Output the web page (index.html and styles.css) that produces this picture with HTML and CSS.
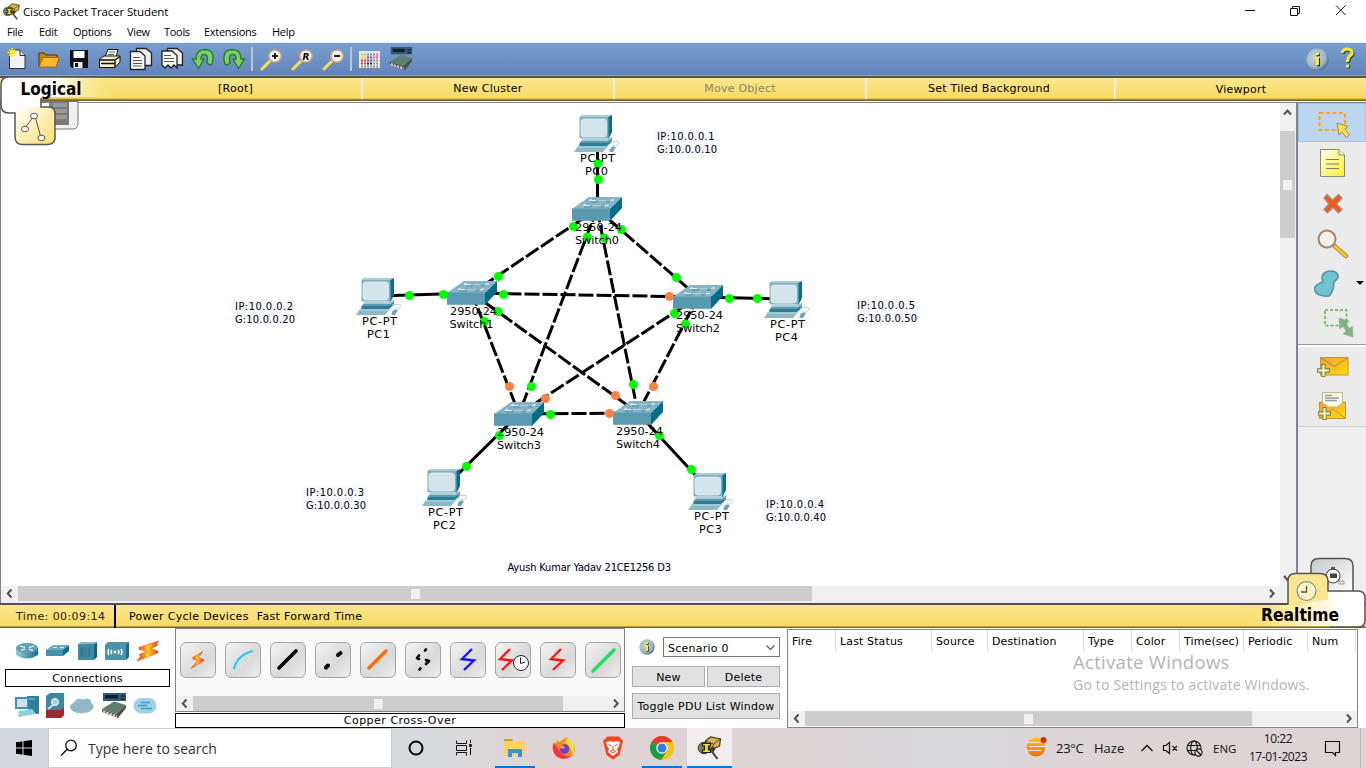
FILE: index.html
```html
<!DOCTYPE html>
<html lang="en">
<head>
<meta charset="utf-8">
<title>Cisco Packet Tracer Student</title>
<link rel="stylesheet" href="styles.css">
</head>
<body>
<svg class="defs" width="0" height="0">
  <defs>
    <linearGradient id="yel" x1="0" y1="0" x2="1" y2="1"><stop offset="0" stop-color="#fff"/><stop offset="1" stop-color="#f9df6c"/></linearGradient>
    <linearGradient id="gry" x1="0" y1="0" x2="1" y2="1"><stop offset="0" stop-color="#c8c8c8"/><stop offset="1" stop-color="#fff"/></linearGradient>
    <linearGradient id="bar" x1="0" x2="1" y1="0" y2="0"><stop offset="0.45" stop-color="#fff"/><stop offset="0.900" stop-color="#fae27b" stop-opacity="0.500"/><stop offset="1" stop-color="#fae27b" stop-opacity="0"/></linearGradient>
    <linearGradient id="barR" x1="0" x2="1" y1="0" y2="0"><stop offset="0" stop-color="#fae27b" stop-opacity="0"/><stop offset="0.300" stop-color="#fbe88f"/><stop offset="0.800" stop-color="#fff"/></linearGradient>
    <linearGradient id="fire" x1="0" x2="1" y1="0" y2="0"><stop offset="0" stop-color="#e52a1a"/><stop offset="0.5" stop-color="#ffd21a"/><stop offset="1" stop-color="#e52a1a"/></linearGradient>
    <linearGradient id="mail" x1="0" x2="1" y1="0" y2="1"><stop offset="0" stop-color="#f79a3c"/><stop offset="1" stop-color="#ffe000"/></linearGradient>
    <linearGradient id="note" x1="0" x2="1" y1="0" y2="1"><stop offset="0" stop-color="#fffff0"/><stop offset="1" stop-color="#f6f32c"/></linearGradient>
    <linearGradient id="teal" x1="0" x2="1" y1="0" y2="0"><stop offset="0" stop-color="#9cc9d6"/><stop offset="1" stop-color="#0d708b"/></linearGradient>
    <radialGradient id="orb" cx="0.4" cy="0.4" r="0.65"><stop offset="0" stop-color="#c3d1d8"/><stop offset="0.7" stop-color="#9fb8c4"/><stop offset="1" stop-color="#426779"/></radialGradient>
    <symbol id="pc" viewBox="0 0 45 37">
      <path d="M5.500 2 L9 0 H38 V17 L34.500 24 Z" fill="#077089"/>
      <path d="M5.500 2 L9 0 H38 L34.500 2 Z" fill="#a9ccd7"/>
      <rect x="5.500" y="2" width="29" height="21.500" rx="1" fill="#7fb0c0"/>
      <rect x="7" y="4" width="25.500" height="18" rx="3" fill="#d3e5eb" stroke="#e4f0f4" stroke-width="0.700"/>
      <path d="M9 24 H34 L38 22 V25 L34 29 H5 Z" fill="#5b9bb0"/>
      <path d="M9 24 H34 L38 22 V23 L34 26 H7 Z" fill="#a9ccd7"/>
      <path d="M6 28 H33 L38 25 V27 L33 31 H5 Z" fill="#2a7f97"/>
      <path d="M4 31 H34 L29 37 H0 Z" fill="#8ab9c8"/>
      <path d="M4 31 H34 L33 33 H2.500 Z" fill="#a5c9d5"/>
      <path d="M36 34 Q38 30.500 42 32 L39 37 H35.500 Z" fill="#6ba5b8"/>
      <path d="M36 27 Q47 25 44.500 29 Q42 32 38 31" fill="none" stroke="#b7d1da" stroke-width="1"/>
    </symbol>
    <symbol id="sw" viewBox="0 0 50 24">
      <path d="M0 12 L17 0 H50 L38 12 Z" fill="#86b4c4"/>
      <path d="M38 12 L50 0 V11 L38 24 Z" fill="#066d88"/>
      <rect x="0" y="11.500" width="38" height="12.300" fill="#5a9ab0"/>
      <path d="M17 3.500 L19 2.500 V3.500 H24 M38 3.500 L41 2.500 V4 M11 8.500 L13 7.500 V8.500 H18 M33 9 L36 8 V9" fill="none" stroke="#e4eff3" stroke-width="1.200"/>
      <path d="M26 3.500 H34 M20 8.500 H29" stroke="#b5d2dc" stroke-width="0.900"/>
      <path d="M19 5 H26 M12 10 H20 M28 10 H32 M34 5 H38" stroke="#4f8ea3" stroke-width="0.900"/>
    </symbol>
    <symbol id="pt" viewBox="0 0 24 24">
      <path d="M8 5 L13 1 L23 3 L22 10 L13 14 L7 10 Z" fill="#d8b25e" stroke="#4b3b16" stroke-width="1.200"/>
      <path d="M8 5 L16 8 L23 3 M16 8 L15 13" stroke="#5b4618" fill="none"/>
      <path d="M12 13 L15 10 L18 13 L16 16 Z" fill="#3b3a26"/>
      <circle cx="6.500" cy="12" r="5.800" fill="#77836f" stroke="#39423a"/>
      <path d="M5 7.500 H13 V10 H11 V14 H13 V16.500 H5 V14 H7 V10 H5 Z" fill="#f3e41b" stroke="#1f1c05" stroke-width="1.200"/>
      <path d="M14 15 L20 23" stroke="#3e3e3e" stroke-width="2"/>
    </symbol>
    <symbol id="info" viewBox="0 0 24 24">
      <circle cx="12" cy="12" r="11.500" fill="url(#orb)"/>
      <path d="M11 6 H14.500 V8.500 H11 Z M10.500 10.500 H14.500 V19 H11.500 V12 H10.500 Z" fill="#111"/>
      <path d="M10 5 H13.500 V7.500 H10 Z M9.500 9.500 H13.500 V18 H10.500 V11.500 H9.500 Z" fill="#ffee2b"/>
    </symbol>
    <symbol id="lens" viewBox="0 0 24 24">
      <path d="M11 14 L3 22" stroke="#ffdc54" stroke-width="3" stroke-linecap="round"/>
      <circle cx="16" cy="9" r="6.300" fill="#f7f2ee" stroke="#c09a84" stroke-width="1.500"/>
    </symbol>
    <symbol id="uturn" viewBox="0 0 24 24">
      <path d="M21 17.500 Q25 3 14 2.500 Q5 2.500 5 12 H1.500 L7.500 21.500 L13 12 H10 Q9.500 7.500 13.500 7.500 Q18 7.500 16 16 Q19 19 21 17.500Z" fill="#7ed25a" stroke="#237a34" stroke-width="1.400"/>
    </symbol>
    <symbol id="device" viewBox="0 0 28 28">
      <rect x="3" y="1" width="23" height="8" fill="#34597a"/><rect x="5" y="3" width="13" height="3.500" fill="#10202d"/><path d="M21 4 H25 M21 7 H25" stroke="#0b141c"/>
      <path d="M2 17 L14 9.500 L26 13 L16 22 Z" fill="#5d7f72"/><path d="M2 17 L16 22 L26 13 V16 L18 26 L2 20 Z" fill="#4d504d"/>
      <path d="M3 19.500 L17 24.500" stroke="#d4d0c0" stroke-width="2.400" stroke-dasharray="2.500 1"/>
    </symbol>
    <symbol id="bolt" viewBox="0 0 24 24">
      <path d="M19 2 L7 9 L7 10.500 L13 13 L5 22 L20 13 L20 11.500 L13.500 9 Z" fill="url(#fire)" stroke="#ef4b20" stroke-width="0.800"/>
    </symbol>
    <symbol id="zig" viewBox="0 0 24 24"><path d="M16 2 L6 12 L18 13.500 L8 23" fill="none" stroke="currentColor" stroke-width="2.400"/></symbol>
    <symbol id="left" viewBox="0 0 15 15"><path d="M10.500 3.500 L6.800 7.500 L10.500 11.500" fill="none" stroke="#505050" stroke-width="2"/></symbol>
    <symbol id="right" viewBox="0 0 15 15"><path d="M5 3.500 L8.700 7.500 L5 11.500" fill="none" stroke="#505050" stroke-width="2"/></symbol>
    <symbol id="plus" viewBox="0 0 12 12"><path d="M4.500 0.500 H7.500 V4.500 H11.500 V7.500 H7.500 V11.500 H4.500 V7.500 H0.500 V4.500 H4.500 Z" fill="#f2f5d0" stroke="#7b8a35"/></symbol>
  </defs>
</svg>

<div class="app">
  <header class="titlebar">
    <svg class="app-icon" width="17" height="17"><use href="#pt"/></svg>
    <span class="title">Cisco Packet Tracer Student</span>
    <svg class="controls" width="116" height="22" fill="none" stroke="#111"><path d="M5 10.500 H15"/><path d="M50.500 8.500 h7 v7 h-7 z M52.500 8 v-1.500 h7 v7 h-2"/><path d="M96 5.500 L105.500 15 M105.500 5.500 L96 15"/></svg>
  </header>
  <nav class="menubar">
    <span class="m1">File</span><span class="m2">Edit</span><span class="m3">Options</span><span class="m4">View</span><span class="m5">Tools</span><span class="m6">Extensions</span><span class="m7">Help</span>
  </nav>
  <div class="toolbar">
    <svg class="tool"><path d="M4.500 3 H15 L20 8 V21.500 H4.500 Z" fill="#f4f4f4" stroke="#333"/><path d="M15 3 V8.500 H20" fill="#ddd" stroke="#333"/><path d="M7 1 V10 M2.500 5.500 H11.500 M4 2.500 L10 8.500 M10 2.500 L4 8.500" stroke="#ffec24" stroke-width="1.500"/></svg>
    <svg class="tool"><path d="M3 20 V6 H8 L10 8 H21 V11" fill="#c98410" stroke="#4c3105"/><path d="M3 20 L7 10.500 H23 L20 20 Z" fill="#ffb92a" stroke="#a86c0c"/></svg>
    <svg class="tool"><path d="M3 3 H21 V21 H5 L3 19 Z" fill="#111"/><rect x="6.500" y="4" width="11" height="7" fill="#fff"/><rect x="6.500" y="15" width="9" height="6" fill="#e8e8e8"/><rect x="8" y="16" width="3" height="4" fill="#111"/></svg>
    <svg class="tool"><path d="M7 10 L10 2.500 H20 L18 10 Z" fill="#fff" stroke="#111"/><path d="M11 5 H17 M10 7.500 H16" stroke="#555"/><path d="M1.500 12 L6 9 H22 V15 L17 20.500 H1.500 Z" fill="#f4f3c4" stroke="#111"/><path d="M1.500 13 H17 V20 M17 13 L22 9.500 M3 16.500 H16" stroke="#111" fill="none" stroke-width="1.500"/></svg>
    <svg class="tool"><path d="M7.500 1.500 H17 L22.500 6 V18.500 H7.500 Z" fill="#eee" stroke="#222" stroke-width="1.300"/><path d="M1.500 4.500 H11 L16 9 V22.500 H1.500 Z" fill="#fff" stroke="#222" stroke-width="1.300"/><path d="M4 10.500 H11 M4 13.500 H13 M4 16.500 H13 M4 19 H13" stroke="#555"/></svg>
    <svg class="tool"><path d="M7.500 1.500 H17 L22.500 6 V18 H7.500 Z" fill="#eee" stroke="#222" stroke-width="1.300"/><path d="M2 4 H12 L17 8.500 V21 L14 18 L11 21 L8 18 L5 21 L2 18 Z" fill="#fff" stroke="#222" stroke-width="1.300"/><path d="M4 8.500 H11 M4 11.500 H14 M4 14.500 H14" stroke="#555"/></svg>
    <svg class="tool"><use href="#uturn"/></svg>
    <svg class="tool"><use href="#uturn" transform="translate(24 0) scale(-1 1)"/></svg>
    <i class="sep"></i>
    <svg class="tool"><use href="#lens"/><path d="M13 9 H19 M16 6 V12" stroke="#222" stroke-width="2"/></svg>
    <svg class="tool"><use href="#lens"/><text x="12.500" y="12.500" class="zr">R</text></svg>
    <svg class="tool"><use href="#lens"/><path d="M13 9 H19" stroke="#222" stroke-width="2"/></svg>
    <i class="sep"></i>
    <svg class="tool"><rect x="1" y="4" width="21" height="17" fill="#e6e6e6"/><g stroke-width="2" stroke-dasharray="2 1"><path d="M3 7.500 H9" stroke="#aadd33"/><path d="M3 10.500 H9" stroke="#ffcc22"/><path d="M3 13.500 H9 M3 16.500 H9" stroke="#e8431c"/><path d="M9 7.500 H15" stroke="#33bbaa"/><path d="M9 10.500 H15 M9 13.500 H15" stroke="#6a4ccc"/><path d="M9 16.500 H15" stroke="#333"/><path d="M15 7.500 H21 M15 10.500 H21" stroke="#e05bd0"/><path d="M15 13.500 H21 M15 16.500 H21 M3 19.500 H21" stroke="#999"/></g></svg>
    <svg class="tool tool-dev"><use href="#device"/></svg>
    <span class="grow"></span>
    <svg class="tool-info"><use href="#info"/></svg>
    <svg class="tool-help" width="18" height="24"><g fill="none" stroke-width="3"><path d="M4 7 Q5 3 9.500 3 Q15 3.500 14 8 Q9.500 11 9.500 16 M9.500 18.500 V21.500" stroke="#2c3c4c"/><path d="M3 6 Q4 2 8.500 2 Q14 2.500 13 7 Q8.500 10 8.500 15 M8.500 17.500 V20.500" stroke="#f5ea2e"/></g></svg>
  </div>

  <div class="navbar">
    <span class="nav n1">[Root]</span><span class="nav n2">New Cluster</span><span class="nav n3">Move Object</span><span class="nav n4">Set Tiled Background</span><span class="nav n5">Viewport</span>
    <svg class="tab-logical" width="120" height="71">
      <path d="M41 25.500 H78 V47 Q78 53 73 53 H50 V25.500 Z" fill="#f0f0f0" stroke="#777"/>
      <rect x="49" y="26" width="20" height="23" fill="#7a7a7a"/><rect x="53" y="27" width="14" height="4" fill="#9a9a9a"/><rect x="53" y="33" width="14" height="4" fill="#9a9a9a"/><rect x="53" y="39" width="14" height="4" fill="#9a9a9a"/>
      <path d="M120 1.500 V21 H41 V31 H9 Q1 29 1 25 V9 Q1 1.500 9 1.500 Z" fill="url(#bar)"/>
      <path d="M1 25 H41 V31 H49 Q55 31 55 38 V62 Q55 68 48 68.500 H22 Q15 68 15 61 V37 H9 Q1 37 1 29 Z" fill="#fff"/>
      <path d="M15 31 H49 Q55 31 55 38 V62 Q55 68 48 68.500 H22 Q15 68 15 61 Z" fill="url(#yel)"/>
      <path d="M120 0.800 H9 Q1 1 1 9 V29 Q1 37 9 37 H15 V61 Q15 68 22 68.500 H48 Q55 68 55 62 V38 Q55 31 49 31 H41 V22" fill="none" stroke="#555" stroke-width="1.500"/>
      <path d="M34 40 L25 52 M35 40 L41 62" stroke="#555" fill="none"/>
      <g fill="#fff" stroke="#555"><ellipse cx="34" cy="40" rx="3.500" ry="2.800"/><ellipse cx="25" cy="53" rx="3.500" ry="2.800"/><ellipse cx="41.500" cy="62" rx="3.500" ry="2.800"/></g>
      <text class="bigtab" x="20.500" y="19" textLength="61" lengthAdjust="spacingAndGlyphs">Logical</text>
    </svg>
  </div>

  <main class="main">
    <section class="workspace">
      <svg class="topology" width="1279" height="483" viewBox="1 103 1279 483">
        <g stroke="#000" stroke-width="3" fill="none">
          <path d="M597.500 145 L597.500 209 M378 296 L472 293 M698 297 L785 299 M519 414 L444 488 M638 413 L710 491"/>
          <g stroke-dasharray="15 3" stroke-dashoffset="1.500">
            <path d="M597 209 L472 293"/><path d="M597 209 L698 297"/><path d="M597 209 L519 414"/><path d="M597 209 L638 413"/>
            <path d="M472 293 L698 297"/><path d="M472 293 L519 414"/><path d="M472 293 L638 413"/>
            <path d="M698 297 L519 414"/><path d="M698 297 L638 413"/><path d="M519 414 L638 413"/>
          </g>
        </g>
        <use href="#pc" x="574" y="115" width="45" height="37"/><use href="#pc" x="356" y="278" width="45" height="37"/><use href="#pc" x="764" y="281" width="45" height="37"/><use href="#pc" x="422" y="469" width="45" height="37"/><use href="#pc" x="688" y="473" width="45" height="37"/>
        <use href="#sw" x="572" y="197" width="50" height="24"/><use href="#sw" x="447" y="281" width="50" height="24"/><use href="#sw" x="673" y="285" width="50" height="24"/><use href="#sw" x="494" y="402" width="50" height="24"/><use href="#sw" x="613" y="401" width="50" height="24"/>
        <g fill="#00ff00">
          <circle cx="598" cy="163.500" r="4.500"/><circle cx="598.500" cy="179.500" r="4.500"/><circle cx="573.500" cy="226.500" r="4.500"/><circle cx="587.500" cy="237" r="4.500"/><circle cx="604.500" cy="238" r="4.500"/><circle cx="621.500" cy="229.500" r="4.500"/>
          <circle cx="409.500" cy="295.500" r="4.500"/><circle cx="443.500" cy="294.500" r="4.500"/><circle cx="498.500" cy="276.500" r="4.500"/><circle cx="503.500" cy="294.500" r="4.500"/><circle cx="498" cy="311.500" r="4.500"/><circle cx="484.500" cy="321.500" r="4.500"/>
          <circle cx="676.500" cy="277.500" r="4.500"/><circle cx="674.500" cy="313.500" r="4.500"/><circle cx="685.500" cy="324" r="4.500"/><circle cx="729.500" cy="298.500" r="4.500"/><circle cx="757.500" cy="298.500" r="4.500"/>
          <circle cx="531.500" cy="386.500" r="4.500"/><circle cx="550.500" cy="414.500" r="4.500"/><circle cx="633.500" cy="384.500" r="4.500"/><circle cx="499.500" cy="435.500" r="4.500"/><circle cx="466.500" cy="466.500" r="4.500"/><circle cx="659.500" cy="435.500" r="4.500"/><circle cx="691.500" cy="469.500" r="4.500"/>
        </g>
        <g fill="#ff8040"><circle cx="669.500" cy="296.500" r="4.500"/><circle cx="509.500" cy="386.500" r="4.500"/><circle cx="545.500" cy="398.500" r="4.500"/><circle cx="609.500" cy="413.500" r="4.500"/><circle cx="615.500" cy="395.500" r="4.500"/><circle cx="653.500" cy="386.500" r="4.500"/></g>
        <g class="label">
          <text x="580" y="162" textLength="35">PC-PT</text><text x="585" y="175" textLength="23">PC0</text>
          <text x="362" y="325" textLength="35">PC-PT</text><text x="367" y="338" textLength="23">PC1</text>
          <text x="770" y="328" textLength="35">PC-PT</text><text x="775" y="341" textLength="23">PC4</text>
          <text x="428" y="516" textLength="35">PC-PT</text><text x="433" y="529" textLength="23">PC2</text>
          <text x="694" y="520" textLength="35">PC-PT</text><text x="699" y="533" textLength="23">PC3</text>
          <text x="575" y="231" textLength="47">2950-24</text><text x="575" y="244" textLength="44">Switch0</text>
          <text x="450" y="315" textLength="47">2950-24</text><text x="449.500" y="328" textLength="44">Switch1</text>
          <text x="676" y="319" textLength="47">2950-24</text><text x="676" y="332" textLength="44">Switch2</text>
          <text x="497" y="436" textLength="47">2950-24</text><text x="497" y="449" textLength="44">Switch3</text>
          <text x="616" y="435" textLength="47">2950-24</text><text x="616" y="448" textLength="44">Switch4</text>
        </g>
        <g fill="#f8f8ff"><rect x="654" y="130" width="64" height="26"/><rect x="232" y="300" width="64" height="26"/><rect x="303" y="486" width="64" height="26"/><rect x="763" y="498" width="64" height="26"/><rect x="854" y="299" width="64" height="26"/><rect x="504" y="561" width="168" height="13"/></g>
        <g class="note">
          <text x="657" y="140" textLength="57.500">IP:10.0.0.1</text><text x="657" y="153" textLength="60">G:10.0.0.10</text>
          <text x="235" y="310" textLength="58">IP:10.0.0.2</text><text x="235" y="323" textLength="60">G:10.0.0.20</text>
          <text x="306" y="496" textLength="58">IP:10.0.0.3</text><text x="306" y="509" textLength="60">G:10.0.0.30</text>
          <text x="766" y="508" textLength="58">IP:10.0.0.4</text><text x="766" y="521" textLength="60">G:10.0.0.40</text>
          <text x="857" y="309" textLength="58">IP:10.0.0.5</text><text x="857" y="322" textLength="60">G:10.0.0.50</text>
          <text x="507.500" y="571" textLength="163.500">Ayush Kumar Yadav 21CE1256 D3</text>
        </g>
      </svg>
      <div class="vscroll"><svg width="15" height="28"><path d="M4 11.500 L7.500 7.500 L11 11.500" fill="none" stroke="#505050" stroke-width="2"/></svg><div class="vthumb"><i class="grip"></i></div><span class="grow"></span><svg width="15" height="15"><path d="M4 5 L7.500 9 L11 5" fill="none" stroke="#505050" stroke-width="2"/></svg></div>
      <div class="hscroll main-scroll"><svg width="17" height="15"><use href="#left" width="15" height="15"/></svg><div class="thumb t-main"><i class="grip"></i></div><span class="grow"></span><svg width="15" height="15"><use href="#right"/></svg></div>
    </section>
    <aside class="side">
      <div class="side-tools">
        <div class="sbtn on"><svg width="36" height="32"><rect x="4.500" y="6" width="25.500" height="17" fill="none" stroke="#ffa31a" stroke-width="2.200" stroke-dasharray="4 2.500"/><path d="M22 16 L33 19.500 L30 22 L34.500 28 L31.500 31 L27 25 L24 28 Z" fill="#ffe04c" stroke="#a08a4c"/></svg></div>
        <div class="sbtn"><svg width="36" height="32"><path d="M5.500 2.500 H24 L29.500 8 V29.500 H5.500 Z" fill="url(#note)" stroke="#8c8c72"/><path d="M24 2.500 V8 H29.500" fill="#f4f4b8" stroke="#8c8c72"/><path d="M11 12.500 H24 M11 17 H24 M11 21.500 H24" stroke="#7e7e62" stroke-width="1.200"/></svg></div>
        <div class="sbtn"><svg width="36" height="32"><path d="M12 7.500 L17.500 13 L23.500 7.500 L27 11 L21.500 17 L27 22.500 L23.500 26 L18 20.500 L12.500 26 L9 22.500 L14 17 L9 11 Z" fill="#ee5a1c" stroke="#a98a7c" stroke-width="1.200"/></svg></div>
        <div class="sbtn"><svg width="36" height="32"><path d="M19.500 19 L31 29" stroke="#9b8e62" stroke-width="4.500" stroke-linecap="round"/><path d="M20 19.500 L31 29" stroke="#ffc818" stroke-width="2.800" stroke-linecap="round"/><circle cx="12" cy="12" r="8.500" fill="#f5f1ee" stroke="#a8846c" stroke-width="2"/></svg></div>
        <div class="sbtn"><svg class="blob" width="36" height="32"><path d="M12 5 Q21 2 24 8 Q25 11 20 15 Q20 24 15 29 Q3 30 0 22 Q2 17 9 15 Q6 8 12 5 Z" fill="#70c4d2" stroke="#4d98a5" stroke-width="1.600"/></svg><i class="drop"></i></div>
        <div class="sbtn"><svg width="40" height="32"><rect x="10" y="3" width="21.500" height="15.500" fill="none" stroke="#6aad52" stroke-width="1.600" stroke-dasharray="3 2"/><path d="M24 11 L34 14 L31.500 17 L34.500 21.500 L37.500 19 L38 30 L28 27 L31 24 L28 19.500 L24.500 22 Z" fill="#7cb482" stroke="#93b896" stroke-width="0.600"/></svg></div>
        <i class="hr"></i>
        <div class="sbtn"><svg width="36" height="32"><rect x="5.500" y="6.500" width="27.500" height="17.500" fill="url(#mail)" stroke="#b8963c"/><path d="M5.500 6.500 L19.500 15.500 L33 6.500" fill="none" stroke="#b8963c" stroke-width="1.300"/><use href="#plus" x="2" y="13" width="13" height="13"/></svg></div>
        <div class="sbtn"><svg width="36" height="32"><path d="M4.500 11 H30.500 V27.500 H4.500 Z" fill="url(#mail)" stroke="#b8963c"/><path d="M7.500 1.500 H27.500 V12 L22 16 H14 L7.500 12 Z" fill="#fbfae8" stroke="#c0b890"/><path d="M10 4.500 H17 M10 7 H24 M10 9.500 H22" stroke="#999" stroke-width="1.300"/><path d="M5 27 L18 18 L30 27" fill="none" stroke="#b8963c"/><use href="#plus" x="3" y="16" width="13" height="13"/></svg></div>
      </div>
    </aside>
    <svg class="tab-realtime" width="140" height="72" viewBox="1226 556 140 72">
      <path d="M1311 592 V566 Q1311 558.500 1319 558.500 H1345 Q1353 558.500 1353 566 V592 Z" fill="url(#gry)" stroke="#555" stroke-width="1.500"/>
      <circle cx="1333" cy="576" r="7" fill="#fff" stroke="#555" stroke-width="1.200"/><rect x="1330" y="573.500" width="7" height="4.500" fill="#444"/><rect x="1331" y="567" width="4" height="3" fill="#555"/><rect x="1339" y="581" width="5" height="3" fill="#f4e7a8" stroke="#777" stroke-width="0.600"/>
      <path d="M1240 605 H1288 V591 H1358 Q1365 591 1365 598 V620 Q1365 626 1358 626 H1240 Z" fill="url(#barR)"/>
      <path d="M1288 606 V581 Q1288 573.500 1295 573.500 H1320 Q1328 573.500 1328 581 V600 Q1310 600 1300 606 Z" fill="#fae68e"/>
      <path d="M1287 604 H1288 V581 Q1288 573.500 1295 573.500 H1320 Q1328 573.500 1328 581 V591 H1358 Q1365 591 1365 598 V620 Q1365 627 1358 627.300 H1330" fill="none" stroke="#555" stroke-width="1.500"/>
      <circle cx="1306.500" cy="591" r="10" fill="#8d8d80"/><circle cx="1306.500" cy="591" r="8" fill="#fff3bc" stroke="#fff" stroke-width="1.500"/><path d="M1306.500 586 V592 H1301" fill="none" stroke="#555" stroke-width="1.300"/>
      <text class="bigtab" x="1261" y="620.500" textLength="78" lengthAdjust="spacingAndGlyphs">Realtime</text>
    </svg>
  </main>

  <div class="timebar"><span class="clock">Time: 00:09:14</span><span class="pcd">Power Cycle Devices</span><span class="fft">Fast Forward Time</span></div>

  <div class="bottom">
    <section class="devices">
      <div class="dev-row">
        <svg width="24" height="18"><path d="M1 6 V13 Q12 20 23 13 V6" fill="url(#teal)"/><ellipse cx="12" cy="6" rx="11" ry="5" fill="#5fa0b6"/><path d="M5 4 L10 5.500 M19 4 L14 5.500 M6 8.500 L10 7 M18 8.500 L14 7" stroke="#fff" stroke-width="1.300"/></svg>
        <svg width="24" height="18"><path d="M1 8 L8 3 H24 L18 8 Z" fill="#6fa9bb"/><path d="M18 8 L24 3 V9 L18 14 Z" fill="#0b6f8a"/><rect x="1" y="8" width="17" height="6" fill="#4590a8"/><path d="M8 5.500 H12 M15 5.500 H19" stroke="#d4e6ec"/></svg>
        <svg width="24" height="20"><path d="M3 3 L6 1 H22 L19 3 Z" fill="#8ab9c8"/><path d="M19 3 L22 1 V16 L19 19 Z" fill="#066d88"/><rect x="3" y="3" width="16" height="16" fill="#3f8ba5"/><path d="M6 6 V16 M8 6 V16 M11 6 V16 M14 6 V16" stroke="#2c6f88"/></svg>
        <svg width="26" height="20"><path d="M1 4 L4 1 H25 V16 L22 19 H1 Z" fill="#4b93ac"/><path d="M22 4 L25 1 V16 L22 19 Z" fill="#1a6c86"/><path d="M5 8 Q3 11 5 14 M8 9 Q6 11 8 13 M14 9 Q16 11 14 13 M17 8 Q19 11 17 14" fill="none" stroke="#fff" stroke-width="1.400"/><circle cx="11" cy="11" r="1.500" fill="#fff"/></svg>
        <svg width="24" height="22" viewBox="0 0 24 24" preserveAspectRatio="none"><path d="M23 1 L3 8 V10 L11 12.500 L3 16 L5 17.500 L1 23 L22 14 V12 L15 9.500 L22 5.500 L20 4.500 Z" fill="url(#fire)" stroke="#ef4b20" stroke-width="0.600"/></svg>
      </div>
      <div class="dev-name">Connections</div>
      <div class="dev-row second">
        <svg width="26" height="24"><path d="M13 2 H25 V20 H15 Z" fill="#307f99"/><path d="M15 5 H21" stroke="#9ccada"/><rect x="1" y="3" width="14" height="12" fill="#3f93ae"/><rect x="3" y="5" width="10" height="8" fill="#c9e4ec"/><path d="M5 17 L18 15 L22 20 L4 23 Z" fill="#8fd0e0"/></svg>
        <svg width="20" height="26"><path d="M1 3 L5 0 H19 V22 L16 25 H1 Z" fill="#3c87a2"/><path d="M1 17 H16 L19 14 V22 L16 25 H1 Z" fill="#9f2730"/><circle cx="10" cy="9" r="3.500" fill="#a8cfda" stroke="#fff"/><path d="M8 12 L3 16" stroke="#fff" stroke-width="1.600"/></svg>
        <svg width="26" height="18"><path d="M4 14 Q-2 9 5 6 Q8 0 14 3 Q22 0 22 6 Q27 10 21 14 Q12 18 4 14Z" fill="#8fb7c5" stroke="#9ebfcb"/></svg>
        <svg width="28" height="28"><use href="#device"/></svg>
        <svg width="26" height="18"><rect x="2" y="1.500" width="22" height="14.500" rx="7" fill="#9fd0e4" stroke="#a9d5e6"/><path d="M9 5.500 H18 M6 8.500 H15 M9 11.500 H20" stroke="#3b9cc6" stroke-width="1.400"/></svg>
      </div>
    </section>

    <section class="cables">
      <div class="cable-box">
        <div class="cable-row">
          <div class="cable"><svg><use href="#bolt" x="2" y="4" width="22" height="20"/></svg></div>
          <div class="cable"><svg><path d="M5 23 Q8 9 24 5" fill="none" stroke="#1cc7ff" stroke-width="2"/></svg></div>
          <div class="cable"><svg><path d="M5 22 L22 5" stroke="#000" stroke-width="3.600" stroke-linecap="round"/></svg></div>
          <div class="cable"><svg><path d="M7 21.500 L9 19.500 M19 9 L21.500 7" stroke="#000" stroke-width="4" stroke-linecap="round"/></svg></div>
          <div class="cable"><svg><path d="M5 22 L22 5" stroke="#ff6d0c" stroke-width="3.600" stroke-linecap="round"/></svg></div>
          <div class="cable"><svg><path d="M17 3.500 L16 4.500 M10 9.500 L8 12 L10 13 M17 14 L20 15 L17 18 M11.500 22.500 L10.500 23.500" fill="none" stroke="#000" stroke-width="2.600" stroke-linecap="round" stroke-linejoin="round"/></svg></div>
          <div class="cable blue"><svg><use href="#zig" x="2" y="1" width="24" height="24"/></svg></div>
          <div class="cable red"><svg><use href="#zig" x="-5" y="1" width="24" height="24"/><circle cx="22" cy="17" r="7.500" fill="#fff" stroke="#222"/><path d="M21.500 11.500 V17.500 L26 16" fill="none" stroke="#222"/></svg></div>
          <div class="cable red"><svg><use href="#zig" x="1" y="1" width="24" height="24"/></svg></div>
          <div class="cable"><svg><path d="M4 25 L25 4" stroke="#1ee064" stroke-width="3.600" stroke-linecap="round"/></svg></div>
        </div>
        <div class="hscroll"><svg width="17" height="15"><use href="#left" width="15" height="15"/></svg><div class="thumb t-cable"><i class="grip"></i></div><span class="grow"></span><svg width="15" height="15"><use href="#right"/></svg></div>
      </div>
      <div class="cable-name">Copper Cross-Over</div>
    </section>

    <section class="scenario">
      <div class="sc-row"><svg class="sc-info" width="16" height="16"><use href="#info"/></svg><div class="select"><span>Scenario 0</span><svg width="12" height="8"><path d="M1.500 1.500 L5.500 5.500 L9.500 1.500" fill="none" stroke="#555" stroke-width="1.200"/></svg></div></div>
      <div class="sc-row buttons"><div class="btn">New</div><div class="btn">Delete</div></div>
      <div class="btn wide">Toggle PDU List Window</div>
    </section>

    <section class="pdu">
      <div class="pdu-head"><span class="c1">Fire</span><span class="c2">Last Status</span><span class="c3">Source</span><span class="c4">Destination</span><span class="c5">Type</span><span class="c6">Color</span><span class="c7">Time(sec)</span><span class="c8">Periodic</span><span class="c9">Num</span></div>
      <div class="activate"><div class="a1">Activate Windows</div><div class="a2">Go to Settings to activate Windows.</div></div>
      <div class="hscroll"><svg width="17" height="15"><use href="#left" width="15" height="15"/></svg><div class="thumb t-pdu"><i class="grip"></i></div><span class="grow"></span><svg width="15" height="15"><use href="#right"/></svg></div>
    </section>
  </div>

  <footer class="taskbar">
    <div class="start"><svg width="16" height="16"><path d="M0 2.300 L6.500 1.400 V7.500 H0 Z M7.500 1.200 L16 0 V7.500 H7.500 Z M0 8.500 H6.500 V14.600 L0 13.700 Z M7.500 8.500 H16 V16 L7.500 14.800 Z" fill="#000"/></svg></div>
    <div class="search"><svg width="18" height="18"><circle cx="11" cy="6.500" r="5.300" fill="none" stroke="#111" stroke-width="1.300"/><path d="M7 10.500 L1 16.500" stroke="#111" stroke-width="1.400"/></svg><span>Type here to search</span></div>
    <div class="task t1"><svg width="18" height="18"><circle cx="9" cy="9" r="6.500" fill="none" stroke="#000" stroke-width="2"/></svg></div>
    <div class="task t2"><svg width="18" height="16" fill="none" stroke="#111"><path d="M1.500 0.500 V3.500 H11.500 V0.500 M1.500 15.500 V12.500 H11.500 V15.500 M1.500 5.500 H11.500 V10.500 H1.500 Z M15.500 0 V3 M15.500 8 V15"/><path d="M15.500 4 V7" stroke-width="2.500"/></svg></div>
    <div class="task t3 open"><svg width="22" height="20"><path d="M0 1 H8 L10 4 H0 Z" fill="#d99a1c"/><rect x="0" y="3" width="21" height="14" fill="#ffd35c"/><path d="M4 19 V11 H18 V19 H14 V15 H8 V19 Z" fill="#3694dc"/></svg></div>
    <div class="task t4"><svg width="24" height="24"><path d="M5 4 L7 6 Q12 3 15 1 Q16 5 20 6 Q26 13 20 20 Q12 26 4 20 Q-2 13 2 6 L4 8 Z" fill="#ff8a1e"/><path d="M15 1 Q16 5 20 6 Q25 12 20 19 Q19 9 13 7 Z" fill="#ffda34"/><path d="M2 7 Q-1 14 4 20 Q12 26 19 20 Q10 21 7 14 Z" fill="#f8324a"/><circle cx="12.500" cy="13" r="4.800" fill="#6b3fd0"/><path d="M7 10 Q12 8 13 12 Q10 13 8 12Z" fill="#ff9b22"/></svg></div>
    <div class="task t5"><svg width="22" height="24"><path d="M5 0.500 H17 L19 3 L21 5 L20 9 L17.500 19 L11 23.500 L4.500 19 L2 9 L1 5 L3 3 Z" fill="#f9431e"/><path d="M4 6 L8 5 L11 6 L14 5 L18 6 L17 10 L15 13 L16 16 L11 20 L6 16 L7 13 L5 10 Z" fill="#fff"/><path d="M6.500 8.500 L9.500 10 M15.500 8.500 L12.500 10 M11 10 V14 M8.500 15.500 L11 14 L13.500 15.500 L11 17 Z" stroke="#f9431e" stroke-width="1" fill="none"/></svg></div>
    <div class="task t6 open"><svg width="24" height="24"><circle cx="12" cy="12" r="12" fill="#fbc116"/><path d="M1.600 6 A12 12 0 0 1 22.400 6 L12 6 L12 12 Z" fill="#e33b2e"/><path d="M1.600 6 A12 12 0 0 0 11 24 L17 15 L12 12 Z" fill="#1a9c4b"/><circle cx="12" cy="12" r="5.700" fill="#fff"/><circle cx="12" cy="12" r="4.500" fill="#2f7de9"/></svg></div>
    <div class="task t7 open"><svg width="25" height="24"><use href="#pt"/></svg></div>
    <span class="grow"></span>
    <div class="tray">
      <svg class="weather" width="22" height="22"><defs><linearGradient id="sun" x1="0" y1="0" x2="0" y2="1"><stop offset="0" stop-color="#ffc91a"/><stop offset="1" stop-color="#ee6a12"/></linearGradient></defs><circle cx="11" cy="11" r="9.500" fill="url(#sun)"/><path d="M2 6.500 H16 M4 10.500 H22 M0 14.500 H16" stroke="#f3e6df" stroke-width="1.200"/><circle cx="18.500" cy="4" r="3" fill="#c92c23"/></svg>
      <span class="temp">23°C</span><span class="haze">Haze</span>
      <svg width="14" height="10" class="caret"><path d="M1.500 8 L7 2.500 L12.500 8" fill="none" stroke="#111" stroke-width="1.300"/></svg>
      <svg width="16" height="14" class="spk" fill="none" stroke="#111"><path d="M1.500 4.500 H4 L7.500 1.500 V12.500 L4 9.500 H1.500 Z M10.500 5 L15 9.500 M15 5 L10.500 9.500" stroke-width="1.200"/></svg>
      <svg width="17" height="17" class="globe" fill="none" stroke="#111" stroke-width="1.100"><circle cx="8" cy="8" r="7"/><ellipse cx="8" cy="8" rx="3.300" ry="7"/><path d="M1 5.500 H15 M1 10.500 H10"/><circle cx="12.500" cy="12.500" r="3.600" fill="#dfd3d4"/><path d="M10 10 L15 15"/></svg>
      <span class="eng">ENG</span>
      <div class="dt"><div class="hm">10:22</div><div class="dmy">17-01-2023</div></div>
      <svg width="17" height="17" class="msg"><path d="M1.500 1.500 H15.500 V12.500 H11.500 V15.500 L8.500 12.500 H1.500 Z" fill="none" stroke="#111" stroke-width="1.200"/></svg>
      <i class="peek"></i>
    </div>
  </footer>
</div>
</body>
</html>
```
FILE: styles.css
```css
* { box-sizing: border-box; }
body { margin: 0; background: #fff; overflow: hidden; font-family: "DejaVu Sans", sans-serif; font-size: 11px; letter-spacing: 0.250px; color: #000; }
svg { display: block; flex: none; letter-spacing: 0; }
.defs { position: absolute; }
.grow { flex: 1; }
.app { width: 1366px; height: 768px; display: flex; flex-direction: column; }
.app span, .app div { white-space: nowrap; }

.titlebar { height: 22px; flex: none; display: flex; align-items: center; font-family: "Open Sans", sans-serif; font-size: 11.500px; }
.app-icon { margin-left: 3px; }
.title { margin-left: 3px; flex: 1; letter-spacing: -0.130px; padding-top: 1px; }
.controls { margin-right: 10px; }
.menubar { height: 21px; flex: none; display: flex; align-items: center; padding: 0 0 1px 7px; font-family: "Open Sans", sans-serif; font-size: 11px; border-bottom: 1px solid #f0f0f0; }
.menubar span { letter-spacing: -0.300px; }
.m1 { width: 32px; } .m2 { width: 34px; } .m3 { width: 54px; } .m4 { width: 37px; } .m5 { width: 40px; } .m6 { width: 68px; }

.toolbar { height: 33px; flex: none; display: flex; align-items: center; padding-left: 1px; background: linear-gradient(#789fcf, #6384bb); border-bottom: 1px solid #8fa3c0; }
.tool { width: 24px; height: 24px; margin: 0 3px 0 4px; }
.tool-dev { width: 28px; height: 26px; margin-left: 2px; }
.sep { width: 2px; height: 24px; background: #b9c4d6; margin: 0 2px; }
.zr { font: italic bold 9px "DejaVu Sans", sans-serif; }
.tool-info { width: 23px; height: 23px; margin-right: 10px; }
.tool-help { margin-right: 9px; }

.navbar { height: 27px; flex: none; position: relative; display: flex; padding-left: 110px; border-top: 2px solid #55554a; border-bottom: 1px solid #80848e; background: linear-gradient(#fbe78f, #f8da64 20px, #c9a93c 21px, #7a6426 22px, #7a6426 23px, #fff 23px); }
.nav { height: 21px; display: flex; align-items: center; justify-content: center; border-right: 2px solid #f3eee4; }
.n1 { width: 253px; } .n2, .n3 { width: 252px; } .n3 { color: #8a8468; } .n4 { width: 249px; } .n5 { width: 250px; border: 0; padding-top: 1px; }
.nav.n1, .nav.n2, .nav.n3, .nav.n4 { padding-bottom: 1px; }
.nav.n4 { padding-right: 3px; }
.tab-logical { position: absolute; left: 0; top: -2px; z-index: 3; }
.bigtab { font: bold 17px "DejaVu Sans Condensed", "DejaVu Sans", sans-serif; }

.main { height: 500px; flex: none; display: flex; position: relative; background: #efefef; }
.workspace { width: 1298px; height: 500px; border-left: 1px solid #80848e; border-right: 2px solid #80848e; display: grid; grid-template-columns: 1279px 15px; grid-template-rows: 483px 15px; background: #efefef; }
.topology { background: #fff; }
.label { font: 11.300px "DejaVu Sans", sans-serif; }
.note { font: 11px "DejaVu Sans Condensed", "DejaVu Sans", sans-serif; }
.vscroll { display: flex; flex-direction: column; background: #f0f0f0; }
.vthumb { height: 107px; background: #cdcdcd; display: flex; align-items: center; justify-content: center; }
.grip { width: 9px; height: 10px; background: #f0f0f0; }
.hscroll { height: 15px; display: flex; align-items: center; background: #f0f0f0; }
.main-scroll { width: 1279px; }
.thumb { height: 15px; background: #cdcdcd; display: flex; align-items: center; justify-content: center; }
.t-main { width: 794px; }
.side { width: 68px; }
.side-tools { height: 324px; background: #ebebeb; border-bottom: 1px solid #ccc; }
.sbtn { height: 40px; display: flex; align-items: center; padding-left: 17px; position: relative; }
.sbtn.on { background: #bcd6ed; border: 1px solid #90c6f2; height: 39px; margin-bottom: 1px; padding-left: 16px; }
.blob { margin-left: -1px; }
.drop { margin-left: 6px; border: 4px solid transparent; border-top-color: #111; border-bottom: 0; }
.hr { display: block; height: 3px; border-top: 1px solid #999; background: #fff; margin-top: 1px; }
.tab-realtime { position: absolute; right: 0; bottom: -25px; z-index: 3; }

.timebar { height: 25px; flex: none; display: flex; align-items: center; padding-left: 16px; border-top: 2px solid #50504e; background: linear-gradient(#fbe78f, #f8da64 21px, #7a6426 22px, #7a6426); letter-spacing: 0.320px; }
.clock { width: 100px; height: 23px; line-height: 23px; border-right: 2px solid #000; color: #2a2000; letter-spacing: 0.420px; }
.pcd { margin-left: 13px; } .fft { margin-left: 8px; }

.bottom { height: 100px; flex: none; display: flex; background: #fff; }
.devices { width: 175px; padding-top: 11px; }
.dev-row { display: flex; align-items: center; justify-content: space-between; padding: 0 15px; height: 24px; }
.second { height: 32px; padding: 2px 17px 0 14px; }
.dev-name { margin: 6px 5px 2px; height: 18px; line-height: 17px; border: 1px solid #000; text-align: center; }
.cables { width: 450px; }
.cable-box { height: 84px; border: 1px solid #80848e; background: #fafafa; }
.cable-row { display: flex; gap: 9px; padding: 13px 0 0 4px; height: 67px; }
.cable { width: 36px; height: 36px; flex: none; border: 1px solid #a3a3a3; border-radius: 6px; background: linear-gradient(135deg, #f4f4f4, #d9d9d9 60%, #efefef); padding: 3px; }
.cable svg { width: 28px; height: 28px; overflow: visible; }
.blue { color: #1414ff; } .red { color: #ff1414; }
.t-cable { width: 370px; }
.cable-name { height: 15px; margin-top: 1px; line-height: 14px; border: 1px solid #000; text-align: center; letter-spacing: 0.500px; }
.scenario { width: 162px; padding: 9px 7px 0; }
.sc-row { display: flex; align-items: center; }
.sc-info { margin: 0 8px 0 7px; }
.select { width: 118px; height: 20px; border: 1px solid #777; display: flex; align-items: center; justify-content: space-between; padding: 2px 2px 0 4px; }
.buttons { gap: 2px; margin: 9px 0 6px; }
.btn { width: 73px; height: 21px; background: #e1e1e1; border: 1px solid #adadad; display: flex; align-items: center; justify-content: center; padding-top: 1px; }
.wide { width: 148px; height: 26px; padding-top: 0; }
.pdu { width: 571px; height: 99px; margin-top: 1px; border: 1px solid #80848e; position: relative; display: flex; flex-direction: column; justify-content: space-between; padding-bottom: 1px; }
.pdu-head { display: flex; height: 22px; line-height: 23px; }
.pdu-head span { padding-left: 4px; border-right: 1px solid #ddd; letter-spacing: 0.130px; }
.c1 { width: 48px; } .c2 { width: 96px; } .c3 { width: 56px; } .c4 { width: 96px; } .c5, .c6 { width: 48px; } .c7, .c8 { width: 64px; } .c9 { width: 48px; }
.t-pdu { width: 447px; }
.activate { position: absolute; left: 285px; top: 20px; color: #b4b4b4; font-family: "Open Sans", sans-serif; letter-spacing: 0; }
.a1 { font-size: 18.500px; line-height: 24px; letter-spacing: 0.300px; } .a2 { font-size: 14px; line-height: 22px; letter-spacing: 0.200px; }

.taskbar { height: 40px; flex: none; display: flex; align-items: center; font-family: "Open Sans", sans-serif; letter-spacing: 0; background: linear-gradient(90deg, #d2d8e0, #d8dbde 420px, #dfd4d5 540px, #dfd3d5 760px, #d8d9dc 960px, #ded4d6 1120px, #dfd4d5); }
.start { width: 48px; display: flex; justify-content: center; }
.search { width: 344px; height: 40px; background: #fff; border: 1px solid #ccc; display: flex; align-items: center; padding-left: 11px; gap: 10px; font-size: 14px; color: #333; }
.task { height: 40px; display: flex; align-items: center; justify-content: center; }
.t1 { width: 48px; } .t2 { width: 48px; }
.t3 { width: 40px; margin-left: 7px; } .t4 { width: 48px; margin-left: 5px; } .t5 { width: 50px; } .t6 { width: 40px; margin-left: 4px; } .t7 { width: 45px; margin-left: 5px; background: #f1eced; }
.open { border-bottom: 2px solid #0078d7; padding-top: 2px; }
.tray { width: 342px; height: 40px; display: flex; align-items: center; font-size: 13px; color: #111; }
.weather { margin: 0 9px 3px 1px; }
.temp { width: 38px; letter-spacing: -0.300px; } .haze { width: 46px; }
.spk { margin-left: 8px; } .globe { margin-left: 8px; }
.eng { margin-left: 10px; width: 32px; font-size: 11.500px; }
.dt { width: 66px; text-align: center; font-size: 12px; line-height: 18px; }
.dmy, .hm { letter-spacing: -0.450px; }
.msg { margin-left: 13px; }
.peek { width: 1px; height: 40px; margin-left: 19px; background: #bfb6b8; }
```
